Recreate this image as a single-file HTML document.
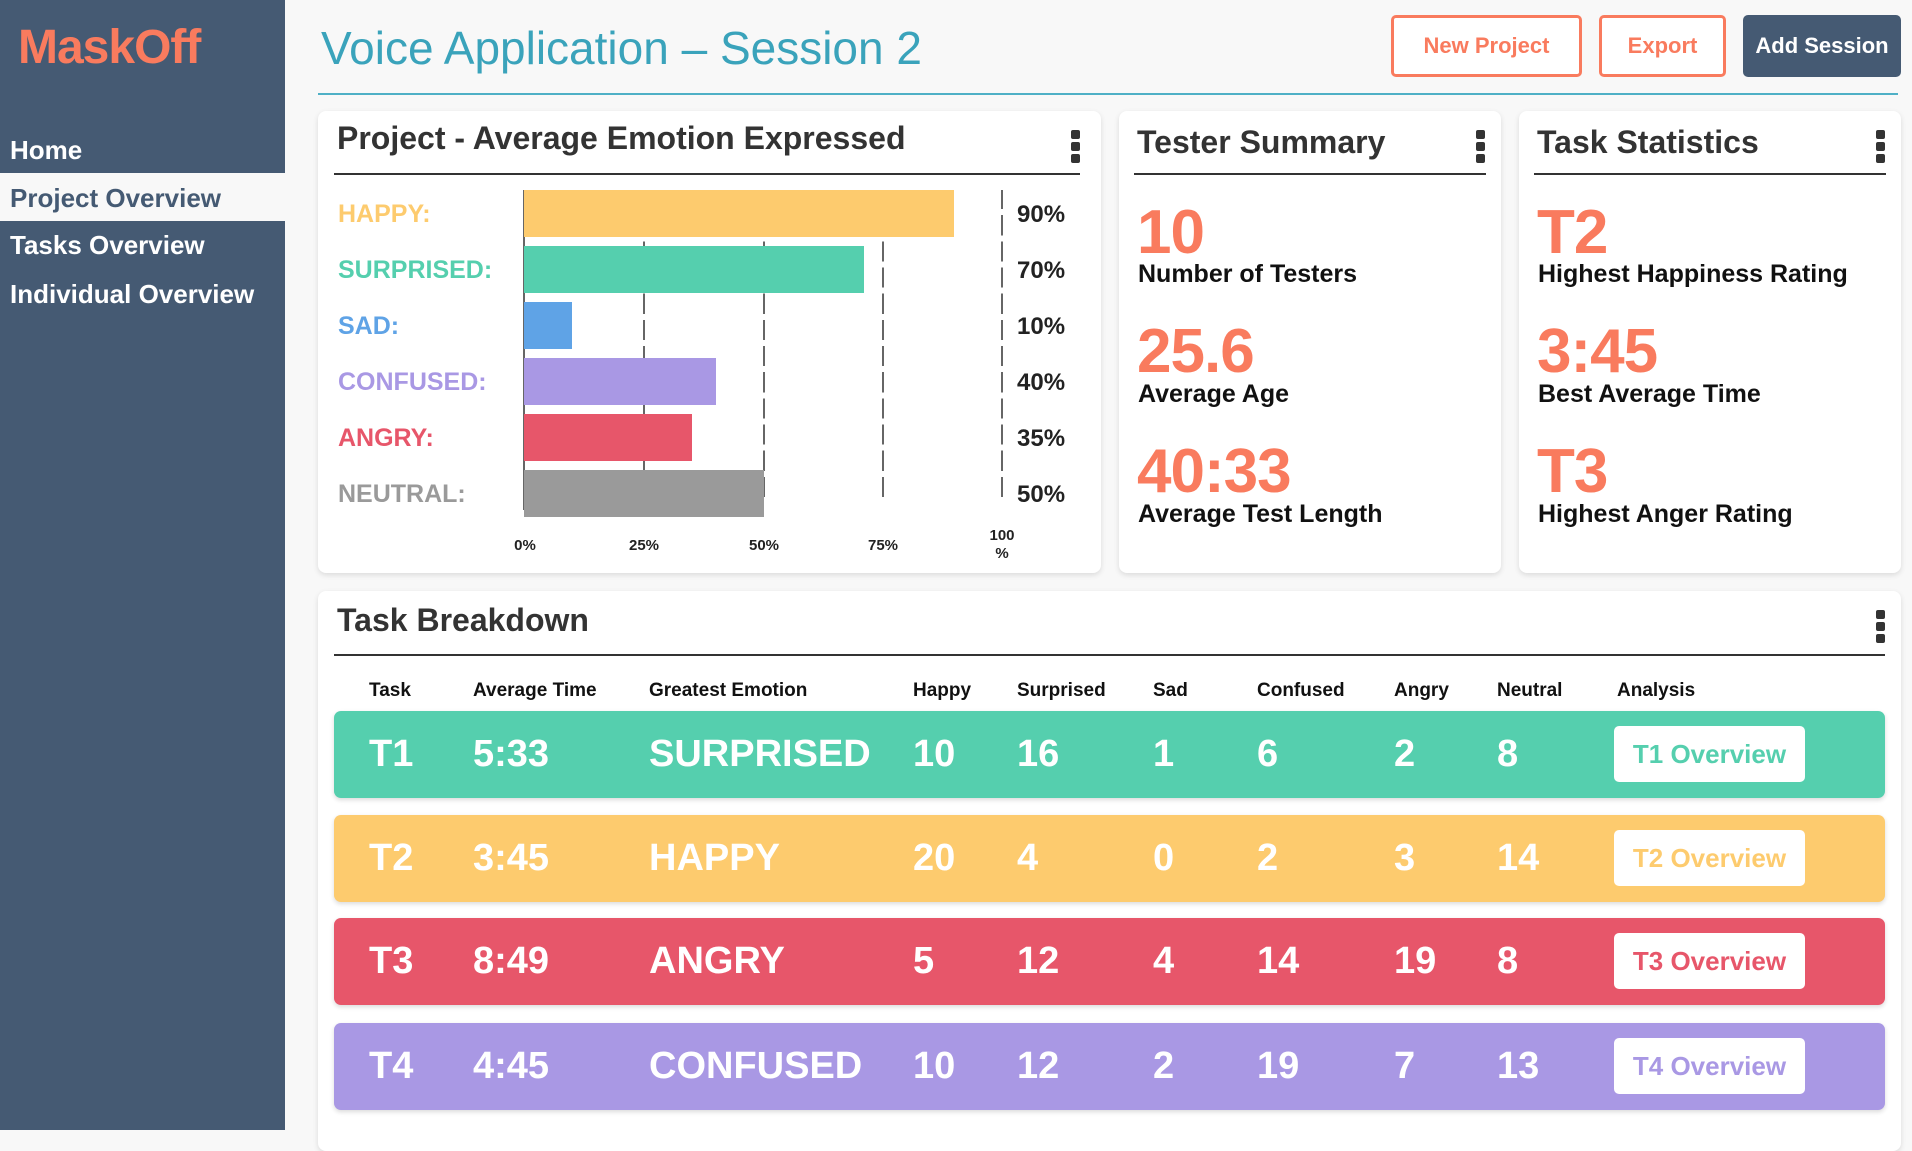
<!DOCTYPE html>
<html><head><meta charset="utf-8"><style>
*{margin:0;padding:0;box-sizing:border-box}
body{width:1912px;height:1130px;overflow:hidden;background:#f8f8f8;font-family:"Liberation Sans",sans-serif;position:relative;color:#222}
.abs{position:absolute}
.side{left:0;top:0;width:285px;height:1130px;background:#455a73}
.logo{left:18px;top:20px;font-size:48px;font-weight:bold;color:#f97b5e;letter-spacing:-1px}
.nav{left:10px;font-size:26px;font-weight:bold;color:#fff;white-space:nowrap}
.navsel{left:0;top:173px;width:285px;height:48px;background:#f8f8f8}
.title{left:321px;top:21px;font-size:46px;color:#3aa3bb;white-space:nowrap}
.hr{left:318px;top:93px;width:1580px;height:2px;background:#4fb0c6}
.btn{top:15px;height:62px;border:3px solid #f97b5e;border-radius:5px;color:#f97b5e;font-size:22px;font-weight:bold;display:flex;align-items:center;justify-content:center;background:#fff}
.card{background:#fff;border-radius:8px;box-shadow:0 2px 6px rgba(0,0,0,.12)}
.ct{font-size:32px;font-weight:bold;color:#333;white-space:nowrap}
.ul{height:2px;background:#333}
.dots{width:9px}
.dots i{display:block;width:9px;height:9px;border-radius:2px;background:#333;margin-bottom:3px}
.lab{left:338px;font-size:25px;font-weight:bold}
.bar{left:524px;height:47px}
.pct{left:1017px;font-size:24px;font-weight:bold}
.grid{width:0;border-left:2px dashed #666;top:190px;height:310px;border-image:repeating-linear-gradient(#666 0 20px,transparent 20px 26px) 1}
.ax{font-size:15px;font-weight:bold;top:537px;transform:translateX(-50%);text-align:center;line-height:18px}
.big{font-size:62px;font-weight:bold;color:#f97b5e;letter-spacing:-1px}
.sl{font-size:25px;font-weight:bold;color:#111;white-space:nowrap}
.th{top:680px;font-size:19px;font-weight:bold;color:#111}
.row{left:334px;width:1551px;height:87px;border-radius:7px;box-shadow:0 2px 5px rgba(0,0,0,.15)}
.row span{position:absolute;top:0;line-height:87px;font-size:38px;font-weight:bold;color:#fff;white-space:nowrap}
.row b{position:absolute;left:1280px;top:15px;width:191px;height:56px;background:#fff;border-radius:5px;font-size:26px;display:flex;align-items:center;justify-content:center}
</style></head><body>
<div class="abs side"></div>
<div class="abs logo">MaskOff</div>
<div class="abs navsel"></div>
<div class="abs nav" style="top:135px">Home</div>
<div class="abs nav" style="top:183px;color:#455a73">Project Overview</div>
<div class="abs nav" style="top:230px">Tasks Overview</div>
<div class="abs nav" style="top:279px">Individual Overview</div>

<div class="abs title">Voice Application – Session 2</div>
<div class="abs hr"></div>
<div class="abs btn" style="left:1391px;width:191px">New Project</div>
<div class="abs btn" style="left:1599px;width:127px">Export</div>
<div class="abs btn" style="left:1743px;width:158px;background:#455a73;border-color:#455a73;color:#fff">Add Session</div>

<div class="abs card" style="left:318px;top:111px;width:783px;height:462px"></div>
<div class="abs ct" style="left:337px;top:120px">Project - Average Emotion Expressed</div>
<div class="abs ul" style="left:334px;top:173px;width:746px"></div>
<div class="abs dots" style="left:1071px;top:130px"><i></i><i></i><i></i></div>
<div class="abs" style="left:523px;top:190px;width:2px;height:320px;background:#666"></div>
<div class="abs grid" style="left:643px"></div>
<div class="abs grid" style="left:763px"></div>
<div class="abs grid" style="left:882px"></div>
<div class="abs grid" style="left:1001px"></div>
<div class="abs bar" style="top:190px;width:430px;background:#fdcb6e"></div>
<div class="abs bar" style="top:246px;width:340px;background:#55cfae"></div>
<div class="abs bar" style="top:302px;width:48px;background:#5fa3e6"></div>
<div class="abs bar" style="top:358px;width:192px;background:#a998e4"></div>
<div class="abs bar" style="top:414px;width:168px;background:#e7566a"></div>
<div class="abs bar" style="top:470px;width:240px;background:#9a9a9a"></div>
<div class="abs lab" style="top:200px;color:#fdcb6e">HAPPY:</div>
<div class="abs lab" style="top:256px;color:#55cfae">SURPRISED:</div>
<div class="abs lab" style="top:312px;color:#5fa3e6">SAD:</div>
<div class="abs lab" style="top:368px;color:#a998e4">CONFUSED:</div>
<div class="abs lab" style="top:424px;color:#e7566a">ANGRY:</div>
<div class="abs lab" style="top:480px;color:#9a9a9a">NEUTRAL:</div>
<div class="abs pct" style="top:201px">90%</div>
<div class="abs pct" style="top:257px">70%</div>
<div class="abs pct" style="top:313px">10%</div>
<div class="abs pct" style="top:369px">40%</div>
<div class="abs pct" style="top:425px">35%</div>
<div class="abs pct" style="top:481px">50%</div>
<div class="abs ax" style="left:525px">0%</div>
<div class="abs ax" style="left:644px">25%</div>
<div class="abs ax" style="left:764px">50%</div>
<div class="abs ax" style="left:883px">75%</div>
<div class="abs ax" style="left:1002px;top:527px">100<br>%</div>

<div class="abs card" style="left:1119px;top:111px;width:382px;height:462px"></div>
<div class="abs ct" style="left:1137px;top:124px">Tester Summary</div>
<div class="abs ul" style="left:1134px;top:173px;width:352px"></div>
<div class="abs dots" style="left:1476px;top:130px"><i></i><i></i><i></i></div>
<div class="abs big" style="left:1137px;top:197px">10</div>
<div class="abs sl" style="left:1138px;top:260px">Number of Testers</div>
<div class="abs big" style="left:1137px;top:316px">25.6</div>
<div class="abs sl" style="left:1138px;top:380px">Average Age</div>
<div class="abs big" style="left:1137px;top:436px">40:33</div>
<div class="abs sl" style="left:1138px;top:500px">Average Test Length</div>

<div class="abs card" style="left:1519px;top:111px;width:382px;height:462px"></div>
<div class="abs ct" style="left:1537px;top:124px">Task Statistics</div>
<div class="abs ul" style="left:1534px;top:173px;width:352px"></div>
<div class="abs dots" style="left:1876px;top:130px"><i></i><i></i><i></i></div>
<div class="abs big" style="left:1537px;top:197px">T2</div>
<div class="abs sl" style="left:1538px;top:260px">Highest Happiness Rating</div>
<div class="abs big" style="left:1537px;top:316px">3:45</div>
<div class="abs sl" style="left:1538px;top:380px">Best Average Time</div>
<div class="abs big" style="left:1537px;top:436px">T3</div>
<div class="abs sl" style="left:1538px;top:500px">Highest Anger Rating</div>

<div class="abs card" style="left:318px;top:591px;width:1583px;height:560px"></div>
<div class="abs ct" style="left:337px;top:602px">Task Breakdown</div>
<div class="abs ul" style="left:334px;top:654px;width:1551px"></div>
<div class="abs dots" style="left:1876px;top:610px"><i></i><i></i><i></i></div>
<div class="abs th" style="left:369px">Task</div>
<div class="abs th" style="left:473px">Average Time</div>
<div class="abs th" style="left:649px">Greatest Emotion</div>
<div class="abs th" style="left:913px">Happy</div>
<div class="abs th" style="left:1017px">Surprised</div>
<div class="abs th" style="left:1153px">Sad</div>
<div class="abs th" style="left:1257px">Confused</div>
<div class="abs th" style="left:1394px">Angry</div>
<div class="abs th" style="left:1497px">Neutral</div>
<div class="abs th" style="left:1617px">Analysis</div>

<div class="abs row" style="top:711px;background:#55cfae"><span style="left:35px">T1</span><span style="left:139px">5:33</span><span style="left:315px">SURPRISED</span><span style="left:579px">10</span><span style="left:683px">16</span><span style="left:819px">1</span><span style="left:923px">6</span><span style="left:1060px">2</span><span style="left:1163px">8</span><b style="color:#55cfae">T1 Overview</b></div>
<div class="abs row" style="top:815px;background:#fdcb6e"><span style="left:35px">T2</span><span style="left:139px">3:45</span><span style="left:315px">HAPPY</span><span style="left:579px">20</span><span style="left:683px">4</span><span style="left:819px">0</span><span style="left:923px">2</span><span style="left:1060px">3</span><span style="left:1163px">14</span><b style="color:#fdcb6e">T2 Overview</b></div>
<div class="abs row" style="top:918px;background:#e7566a"><span style="left:35px">T3</span><span style="left:139px">8:49</span><span style="left:315px">ANGRY</span><span style="left:579px">5</span><span style="left:683px">12</span><span style="left:819px">4</span><span style="left:923px">14</span><span style="left:1060px">19</span><span style="left:1163px">8</span><b style="color:#e7566a">T3 Overview</b></div>
<div class="abs row" style="top:1023px;background:#a998e4"><span style="left:35px">T4</span><span style="left:139px">4:45</span><span style="left:315px">CONFUSED</span><span style="left:579px">10</span><span style="left:683px">12</span><span style="left:819px">2</span><span style="left:923px">19</span><span style="left:1060px">7</span><span style="left:1163px">13</span><b style="color:#a998e4">T4 Overview</b></div>
</body></html>
